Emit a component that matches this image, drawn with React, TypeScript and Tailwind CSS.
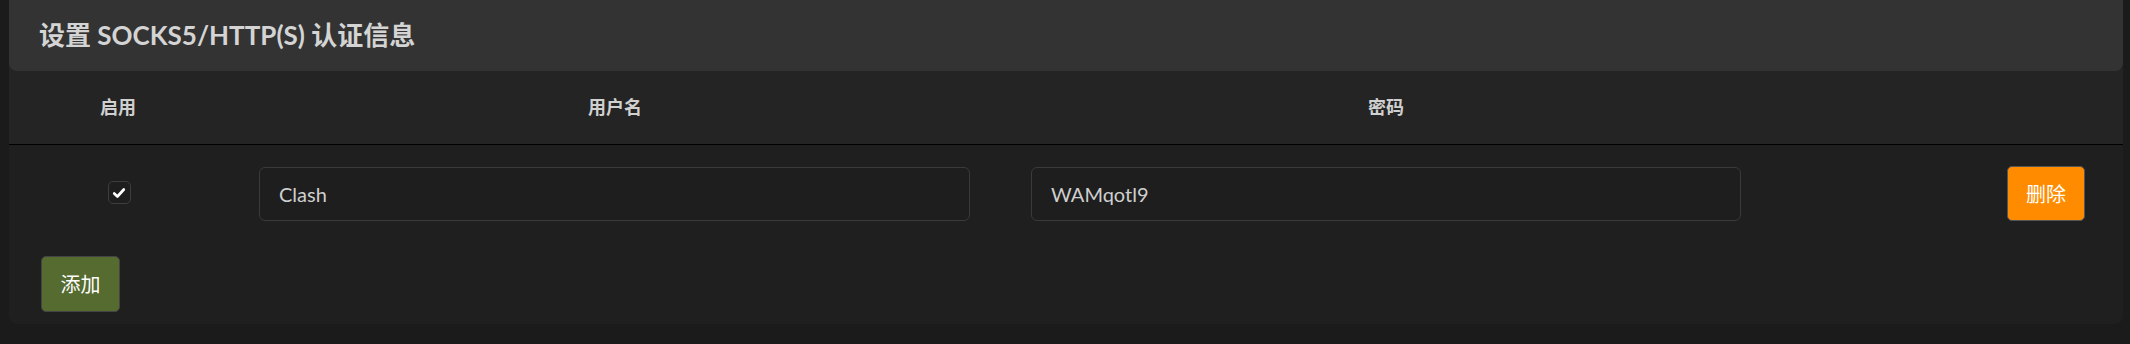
const font = "font-['Lato','Noto_Sans_CJK_SC',sans-serif]";

const Check = () => (
  <span className="flex h-[23px] w-[23px] items-center justify-center rounded-[5px] border border-[#3d3d3d] bg-[#1e1e1e]">
    <svg viewBox="0 0 16 16" className="h-[14px] w-[14px]">
      <path d="M2.5 8.5 L6.2 12 L13.5 4" fill="none" stroke="#fff" strokeWidth="3" strokeLinecap="round" strokeLinejoin="round" />
    </svg>
  </span>
);

export default function App() {
  return (
    <div className={`min-h-screen bg-[#1b1b1b] pl-[9px] pr-[7px] ${font}`}>
      <div className="overflow-hidden rounded-b-lg bg-[#1f1f1f]">
        <div className="bg-[#242424]">
          <div className="flex h-[71px] items-center rounded-b-lg bg-[#333333] px-[30px]">
            <h2 className="text-[26px] font-bold text-[#d4d4d4]">设置 SOCKS5/HTTP(S) 认证信息</h2>
          </div>
          <div className="grid h-[74px] grid-cols-[218px_776px_766px_1fr] items-center border-b border-black text-[18px] font-bold text-[#d0d0d0]">
            <div className="text-center">启用</div>
            <div className="text-center">用户名</div>
            <div className="text-center">密码</div>
            <div />
          </div>
        </div>

        <div className="grid grid-cols-[218px_776px_766px_1fr] items-center pb-[22px] pt-[21px]">
          <div className="flex justify-center pb-[2px] pl-[2px]">
            <Check />
          </div>
          <div className="pl-[32px]">
            <input
              defaultValue="Clash"
              className="h-[54px] w-[711px] rounded-md border border-[#3a3a3a] bg-[#1e1e1e] px-[19px] text-[20px] text-[#cfcfcf] outline-none"
            />
          </div>
          <div className="pl-[28px]">
            <input
              defaultValue="WAMqotl9"
              className="h-[54px] w-[710px] rounded-md border border-[#3a3a3a] bg-[#1e1e1e] px-[19px] text-[20px] text-[#cfcfcf] outline-none"
            />
          </div>
          <div className="flex justify-end pr-[38px]">
            <button className="h-[55px] w-[78px] rounded-[5px] border border-[#555] bg-[#ff8c00] text-[20px] text-white">
              删除
            </button>
          </div>
        </div>

        <div className="pb-[12px] pl-[32px] pt-[13px]">
          <button className="h-[56px] w-[79px] rounded-[5px] border border-[#444] bg-[#556b2f] text-[20px] text-white">
            添加
          </button>
        </div>
      </div>
    </div>
  );
}
